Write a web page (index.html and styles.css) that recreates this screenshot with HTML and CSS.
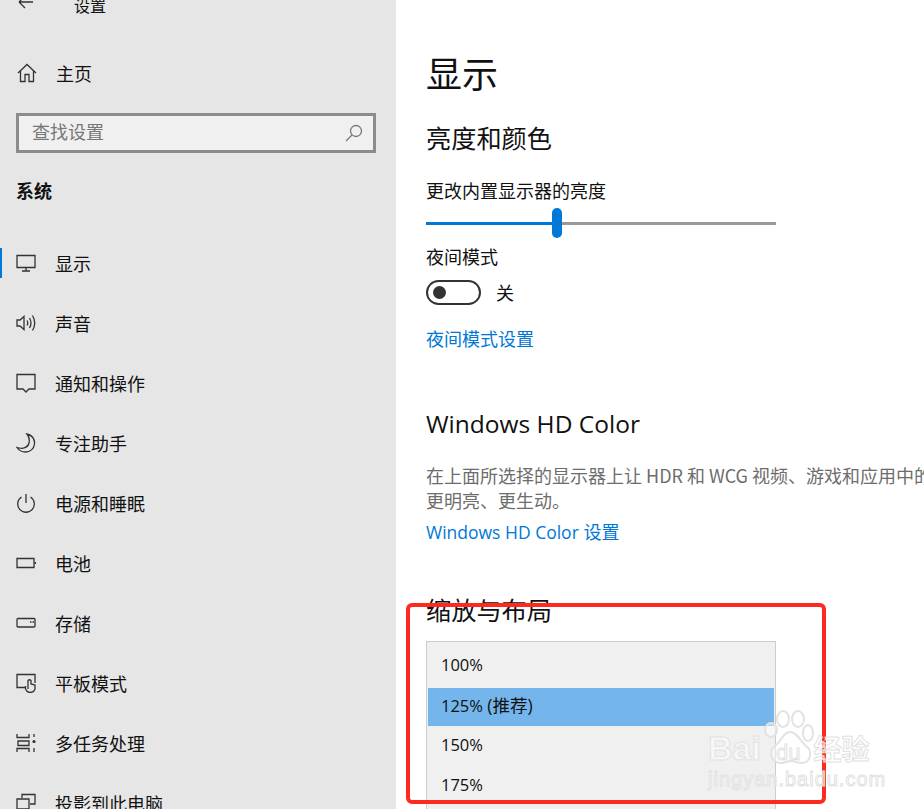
FILE: index.html
```html
<!DOCTYPE html>
<html lang="zh-CN">
<head>
  <meta charset="UTF-8">
  <title>设置</title>
  <link rel="stylesheet" href="styles.css">
</head>
<body>
  <div class="window">
    <aside class="sidebar">
      <div class="title-bar">
        <svg class="back-icon" width="16" height="16" viewBox="0 0 16 16"><path d="M1 6 H15 M1 6 L7 0 M1 6 L7 12"/></svg>
        <span class="app-name">设置</span>
      </div>
      <div class="home-row">
        <svg class="icon" width="20" height="20" viewBox="0 0 20 20"><path d="M1 10 L10 1.5 L19 10 M3.5 8 V18.5 H8 V11.5 H12 V18.5 H16.5 V8"/></svg>
        <span>主页</span>
      </div>
      <div class="search">
        <span class="search-text">查找设置</span>
        <svg class="search-icon" width="18" height="18" viewBox="0 0 18 18"><circle cx="11" cy="7" r="5.5"/><path d="M7 11 L1 17"/></svg>
      </div>
      <h3 class="group-title">系统</h3>
      <nav class="nav">
        <div class="nav-item active">
          <svg class="icon" width="20" height="20" viewBox="0 0 20 20"><path d="M1 2.5 H19 V14.5 H1 Z M10 14.5 V18 M6 18 H14"/></svg>
          <span>显示</span>
        </div>
        <div class="nav-item">
          <svg class="icon" width="20" height="20" viewBox="0 0 20 20"><path d="M1 7 H4 L8 3.5 V16.5 L4 13 H1 Z M11 7.5 Q12.5 10 11 12.5 M13.5 5 Q16.5 10 13.5 15 M16.5 2.5 Q21 10 16.5 17.5"/></svg>
          <span>声音</span>
        </div>
        <div class="nav-item">
          <svg class="icon" width="20" height="20" viewBox="0 0 20 20"><path d="M1 1.5 H19 V16 H13 L10 19 L7 16 H1 Z"/></svg>
          <span>通知和操作</span>
        </div>
        <div class="nav-item">
          <svg class="icon" width="20" height="20" viewBox="0 0 20 20"><path d="M11 1 C16 2 19 6 18.5 11 C18 16 14 19 9.5 19 C6 19 3 17.5 1 14.5 C7 16.5 12 14.5 13 10 C13.8 6.5 13 3.5 11 1 Z"/></svg>
          <span>专注助手</span>
        </div>
        <div class="nav-item">
          <svg class="icon" width="20" height="20" viewBox="0 0 20 20"><path d="M10 1 V10 M5.5 4 A8.3 8.3 0 1 0 14.5 4"/></svg>
          <span>电源和睡眠</span>
        </div>
        <div class="nav-item">
          <svg class="icon" width="20" height="20" viewBox="0 0 20 20"><path d="M1 5.5 H18 V14.5 H1 Z M19.5 9 V11"/></svg>
          <span>电池</span>
        </div>
        <div class="nav-item">
          <svg class="icon" width="20" height="20" viewBox="0 0 20 20"><path d="M1 6.5 Q1 5.5 2 5.5 H18 Q19 5.5 19 6.5 V13 Q19 14 18 14 H2 Q1 14 1 13 Z M14 9 H15.5 M16.5 9 H18"/></svg>
          <span>存储</span>
        </div>
        <div class="nav-item">
          <svg class="icon" width="20" height="20" viewBox="0 0 20 20"><path d="M9 14.5 H1 V1.5 H19 V10 M12 16 V7.5 Q13.5 6 15 7.5 V11 L19 12 V16 Q18 19.5 14 19.5 Q11 19.5 9.5 16 V13"/></svg>
          <span>平板模式</span>
        </div>
        <div class="nav-item">
          <svg class="icon" width="20" height="20" viewBox="0 0 20 20"><path d="M1 1 V4.5 H13 V1 M2 8 H13 V12.5 H2 Z M1 19 V15.5 H13 V19 M18 1 V4 M18 15 V19"/><circle class="dot" cx="18" cy="8.5" r="1.6"/></svg>
          <span>多任务处理</span>
        </div>
        <div class="nav-item">
          <svg class="icon" width="20" height="20" viewBox="0 0 20 20"><path d="M6 5 V1.5 H19 V11 H14 M1 6 H13 V16 H1 Z"/></svg>
          <span>投影到此电脑</span>
        </div>
      </nav>
    </aside>

    <main class="content">
      <h1 class="page-title">显示</h1>
      <h2 class="section-title first">亮度和颜色</h2>
      <p class="label">更改内置显示器的亮度</p>
      <div class="slider">
        <div class="slider-fill"></div>
        <div class="slider-thumb"></div>
        <div class="slider-rest"></div>
      </div>
      <p class="label night">夜间模式</p>
      <div class="toggle-row">
        <div class="toggle"><div class="toggle-knob"></div></div>
        <span>关</span>
      </div>
      <a class="link night-link">夜间模式设置</a>

      <h2 class="section-title hd">Windows HD Color</h2>
      <p class="desc">在上面所选择的显示器上让 HDR 和 WCG 视频、游戏和应用中的</p>
      <p class="desc">更明亮、更生动。</p>
      <a class="link hd-link"><span class="latin">Windows HD Color</span> 设置</a>

      <h2 class="section-title scale">缩放与布局</h2>
      <div class="dropdown">
        <div class="option">100%</div>
        <div class="option selected">125% <span class="option-note">(推荐)</span></div>
        <div class="option">150%</div>
        <div class="option">175%</div>
      </div>
    </main>
  </div>

  <div class="red-box"></div>
  <div class="watermark">
    <svg class="paw" width="52" height="56" viewBox="0 0 52 56"><ellipse cx="7" cy="20" rx="6" ry="7"/><ellipse cx="19" cy="9" rx="6" ry="8"/><ellipse cx="34" cy="9" rx="6" ry="8"/><ellipse cx="44" cy="23" rx="5" ry="8"/><path d="M26 22 C19 22 18 31 11 36 C4 41 7 53 17 53 C22 53 24 51 27 51 C30 51 33 53 37 53 C47 53 49 41 42 36 C36 31 33 22 26 22 Z"/></svg>
    <div class="wm-brand"><span>Bai</span><span class="wm-du">du</span><span class="wm-cn">经验</span></div>
    <div class="wm-url">jingyan.baidu.com</div>
  </div>
</body>
</html>
```
FILE: styles.css
```css
html, body {
  margin: 0;
  padding: 0;
  height: 809px;
  overflow: hidden;
  background: #ffffff;
}
body {
  font-family: "Noto Sans CJK SC", "Open Sans", sans-serif;
  font-size: 18px;
  color: #111111;
  position: relative;
}
svg {
  fill: none;
  stroke: #333333;
  stroke-width: 1.3;
}
.window {
  display: flex;
  height: 809px;
}

/* left column */
.sidebar {
  width: 396px;
  flex: none;
  background: #e6e6e6;
  overflow: hidden;
}
.title-bar {
  display: flex;
  align-items: center;
  height: 10px;
  padding-left: 18px;
}
.back-icon {
  margin-top: -2px;
}
.app-name {
  margin-left: 40px;
  font-size: 16px;
  line-height: 10px;
}
.home-row {
  display: flex;
  align-items: center;
  height: 30px;
  margin-top: 48px;
  padding-left: 17px;
}
.home-row span {
  margin-left: 19px;
  line-height: 30px;
}
.search {
  display: flex;
  align-items: center;
  justify-content: space-between;
  box-sizing: border-box;
  width: 360px;
  height: 40px;
  margin: 25px 0 0 16px;
  padding: 0 10px 0 13px;
  border: 3px solid #8c8c8c;
  background: #f0f0f0;
  color: #777777;
}
.search-text {
  padding-bottom: 4px;
}
.search-icon {
  stroke: #777777;
}
.group-title {
  margin: 23px 0 0 16px;
  font-size: 18px;
  line-height: 28px;
  font-weight: 700;
}
.nav {
  margin-top: 29px;
}
.nav-item {
  display: flex;
  align-items: center;
  height: 60px;
  padding-left: 16px;
  position: relative;
}
.nav-item span {
  margin-left: 19px;
}
.nav-item .dot {
  fill: #333333;
  stroke: none;
}
.nav-item.active::before {
  content: "";
  position: absolute;
  left: 0;
  top: 15px;
  width: 2px;
  height: 30px;
  background: #0078d7;
}

/* right column */
.content {
  flex: 1;
  min-width: 0;
  padding-left: 30px;
  overflow: hidden;
}
.page-title {
  margin: 48px 0 0;
  font-size: 36px;
  line-height: 48px;
  font-weight: 400;
}
.section-title {
  margin: 0;
  font-size: 25.2px;
  line-height: 34px;
  font-weight: 400;
}
.section-title.first {
  margin-top: 24px;
}
.section-title.hd {
  margin-top: 56px;
  font-size: 24.5px;
  font-family: "Open Sans", "Noto Sans CJK SC", sans-serif;
}
.section-title.scale {
  margin-top: 47px;
}
.label {
  margin: 0;
  line-height: 26px;
}
.first + .label {
  margin-top: 23px;
}
.slider {
  display: flex;
  align-items: center;
  width: 350px;
  height: 30px;
  margin-top: 5px;
}
.slider-fill {
  width: 126px;
  height: 3px;
  background: #0078d7;
}
.slider-thumb {
  width: 10px;
  height: 30px;
  border-radius: 5px;
  background: #0078d7;
}
.slider-rest {
  flex: 1;
  height: 3px;
  background: #999999;
}
.label.night {
  margin-top: 5px;
}
.toggle-row {
  display: flex;
  align-items: center;
  height: 26px;
  margin-top: 10px;
}
.toggle-row span {
  margin-left: 15px;
}
.toggle {
  display: flex;
  align-items: center;
  box-sizing: border-box;
  width: 55px;
  height: 25px;
  padding-left: 5px;
  border: 2px solid #333333;
  border-radius: 13px;
}
.toggle-knob {
  width: 13px;
  height: 13px;
  border-radius: 50%;
  background: #333333;
}
.link {
  display: block;
  color: #0078d7;
  line-height: 26px;
}
.night-link {
  margin-top: 20px;
}
.desc {
  margin: 0;
  color: #6d6d6d;
  line-height: 25px;
  white-space: nowrap;
}
.hd + .desc {
  margin-top: 22px;
}
.hd-link {
  margin-top: 6px;
  font-family: "Open Sans", "Noto Sans CJK SC", sans-serif;
}
.latin {
  font-size: 17.5px;
}
.dropdown {
  box-sizing: border-box;
  width: 350px;
  height: 200px;
  margin-top: 15px;
  padding: 6px 1px 0;
  border: 1px solid #cccccc;
  background: #f0f0f0;
}
.option {
  height: 38px;
  margin-bottom: 2px;
  padding-left: 13px;
  line-height: 34px;
  font-family: "Open Sans", "Noto Sans CJK SC", sans-serif;
  font-size: 16.5px;
}
.option.selected {
  background: #74b6ec;
}
.option-note {
  font-size: 17.5px;
}

/* annotation drawn over the screenshot */
.red-box {
  position: absolute;
  left: 406px;
  top: 603px;
  box-sizing: border-box;
  width: 420px;
  height: 201px;
  border: 4px solid #ff2a1f;
  border-radius: 6px;
}
.watermark {
  position: absolute;
  left: 708px;
  top: 708px;
  width: 170px;
  color: rgba(255, 255, 255, 0.55);
  font-family: "Liberation Sans", sans-serif;
  -webkit-text-stroke: 1px #e2e2e2;
}
.paw {
  position: absolute;
  left: 56px;
  top: 2px;
  stroke: #e2e2e2;
  stroke-width: 2;
  fill: rgba(255, 255, 255, 0.45);
}
.wm-brand {
  position: relative;
  display: flex;
  align-items: baseline;
  height: 40px;
  margin-top: 20px;
  font-size: 34px;
  line-height: 40px;
  font-weight: 700;
}
.wm-du {
  margin-left: 15px;
  font-size: 22px;
  font-weight: 400;
}
.wm-cn {
  margin-left: 13px;
  font-family: "Noto Sans CJK SC", sans-serif;
  font-size: 28px;
}
.wm-url {
  position: relative;
  font-size: 20px;
  line-height: 22px;
  letter-spacing: 1px;
}
```
